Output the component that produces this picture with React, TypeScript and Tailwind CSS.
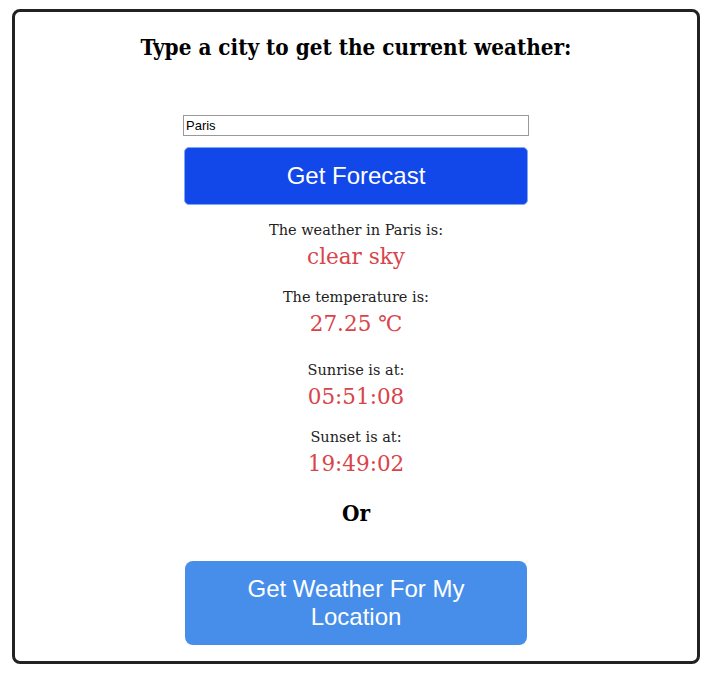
import { useState } from 'react';

const serif = { fontFamily: '"DejaVu Serif", "Liberation Serif", serif' };
const heading = { fontFamily: '"DejaVu Serif Condensed", "DejaVu Serif", serif' };
const sans = { fontFamily: '"Liberation Sans", Arial, sans-serif' };

function Reading({ label, value, className = '' }: { label: string; value: string; className?: string }) {
  return (
    <div className={`flex flex-col items-center ${className}`}>
      <p className="text-[14.5px] leading-[20px] text-[#222]">{label}</p>
      <p className="text-[21.5px] leading-[34px] text-[#d9444b]">{value}</p>
    </div>
  );
}

export default function App() {
  const [city, setCity] = useState('Paris');

  return (
    <div className="min-h-[678px] bg-white pt-[9px] pl-[12px] pr-[5px]">
      <div
        className="flex h-[655px] w-[688px] flex-col items-center rounded-lg border-[3px] border-[#222] bg-white"
        style={serif}
      >
        <h1 className="mt-[20px] text-[22.3px] font-semibold leading-[30px] text-black font-stretch-condensed" style={heading}>
          Type a city to get the current weather:
        </h1>

        <input
          value={city}
          onChange={(e) => setCity(e.target.value)}
          className="mt-[53px] h-[21px] w-[346px] border border-[#999] px-[2px] text-[13px] text-black outline-none"
          style={sans}
        />

        <button
          type="button"
          className="mt-[11px] h-[58px] w-[344px] rounded-[5px] border border-[#7fa8f5] bg-[#1247ea] text-[24px] text-white"
          style={sans}
        >
          Get Forecast
        </button>

        <div className="mt-[15px] flex flex-col items-center gap-[13px]">
          <Reading label="The weather in Paris is:" value="clear sky" />
          <Reading label="The temperature is:" value="27.25 ℃" />
          <Reading label="Sunrise is at:" value="05:51:08" className="mt-[6px]" />
          <Reading label="Sunset is at:" value="19:49:02" />
        </div>

        <p className="mt-[17px] text-[22.3px] font-semibold leading-[30px] text-black font-stretch-condensed" style={heading}>
          Or
        </p>

        <button
          type="button"
          className="mt-[33px] h-[84px] w-[342px] rounded-lg bg-[#468ee9] px-[40px] text-[24px] leading-[28px] text-white"
          style={sans}
        >
          Get Weather For My Location
        </button>
      </div>
    </div>
  );
}
